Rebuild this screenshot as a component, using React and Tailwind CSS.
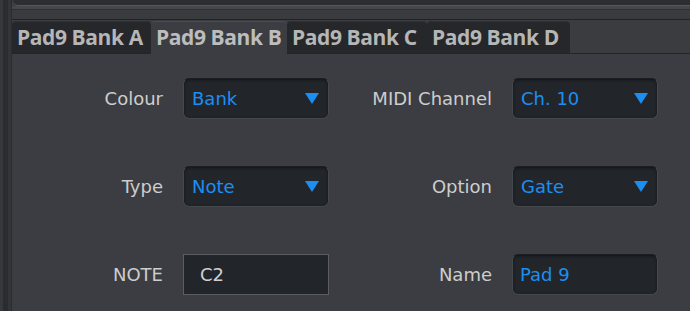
import React from "react";

const font = { fontFamily: '"DejaVu Sans", "Liberation Sans", sans-serif' };
const tabFont = { fontFamily: '"Open Sans", "DejaVu Sans", sans-serif' };

function Tab({ label, active }) {
  return (
    <div
      style={tabFont}
      className={
        "h-full flex items-center rounded-t-[4px] pl-[5px] text-[21px] font-bold tracking-[-0.4px] " +
        (active
          ? "bg-[#3b3d42] text-[#bdbdbd] border-t border-[#4a4c51]"
          : "bg-[#25272b] text-[#b6b6b6] border-t border-[#2e3034]")
      }
    >
      {label}
    </div>
  );
}

function Arrow() {
  return (
    <svg width="14" height="11" viewBox="0 0 14 11" className="shrink-0">
      <polygon points="0,0 14,0 7,11" fill="#1c8ef2" />
    </svg>
  );
}

function Select({ value }) {
  return (
    <div className="h-[41px] rounded-[6px] bg-[#22262b] border border-[#45484d] border-t-[#1b1d21] shadow-[inset_0_1px_3px_rgba(0,0,0,0.5)] flex items-center justify-between pl-[8px] pr-[9px]">
      <span className="text-[18px] text-[#1c8ef2] leading-none">{value}</span>
      <Arrow />
    </div>
  );
}

function Label({ children }) {
  return (
    <div className="h-[41px] flex items-center justify-end text-[18px] text-[#cdcdcd]">
      {children}
    </div>
  );
}

export default function App() {
  return (
    <div style={font} className="w-[690px] h-[311px] overflow-hidden flex bg-[#3b3d42]">
      {/* left edge strip */}
      <div className="w-[12px] h-full flex shrink-0">
        <div className="w-[3px] h-full bg-[#36383c]" />
        <div className="w-[5px] h-full bg-[#2a2c30]" />
        <div className="w-[4px] h-full bg-[#333539] border-r border-[#2a2c30]" />
      </div>
      <div className="flex-1 flex flex-col">
        {/* top strip */}
        <div className="h-[20px] flex flex-col shrink-0">
          <div className="h-[6px] bg-[#2c2e32] border-b border-[#55575b] rounded-bl-[5px] ml-[1px]" />
          <div className="h-[3px] bg-[#45474b]" />
          <div className="h-[1px] bg-[#2e3034]" />
          <div className="flex-1 bg-[#393b3f] border-b border-[#202226]" />
        </div>
        {/* tab bar */}
        <div className="h-[34px] flex items-end bg-[#3a3c40] border-b border-[#232529] shrink-0">
          <div className="h-[32px] flex">
            <div className="w-[139px] flex"><div className="w-full"><Tab label="Pad9 Bank A" /></div></div>
            <div className="w-[136px] flex relative z-10 -mb-[1px] h-[33px]"><div className="w-full"><Tab label="Pad9 Bank B" active /></div></div>
            <div className="w-[140px] flex"><div className="w-full"><Tab label="Pad9 Bank C" /></div></div>
            <div className="w-[143px] flex"><div className="w-full"><Tab label="Pad9 Bank D" /></div></div>
          </div>
        </div>
        {/* panel */}
        <div className="flex-1 pt-[24px]">
          <div className="grid grid-cols-[151px_146px_143px_146px] gap-x-5 gap-y-[47px]">
            <Label>Colour</Label>
            <Select value="Bank" />
            <Label>MIDI Channel</Label>
            <Select value="Ch. 10" />

            <Label>Type</Label>
            <Select value="Note" />
            <Label>Option</Label>
            <Select value="Gate" />

            <Label>NOTE</Label>
            <div className="h-[41px] bg-[#22262b] border border-[#5a5d62] flex items-center pl-[16px] text-[18px] text-[#d0d0d0]">
              C2
            </div>
            <Label>Name</Label>
            <div className="h-[41px] rounded-[6px] bg-[#22262b] border border-[#45484d] border-t-[#1b1d21] shadow-[inset_0_1px_3px_rgba(0,0,0,0.5)] flex items-center pl-[7px] text-[18px] text-[#1c8ef2]">
              Pad 9
            </div>
          </div>
        </div>
      </div>
    </div>
  );
}
